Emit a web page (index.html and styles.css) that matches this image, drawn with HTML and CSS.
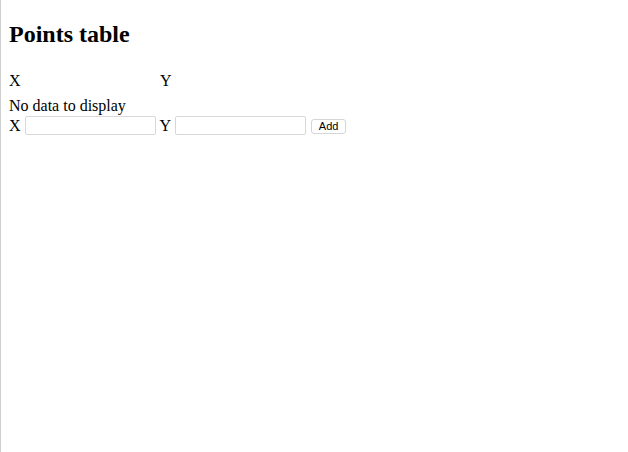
FILE: index.html
```html
<!DOCTYPE html>
<html>
<head>
<meta charset="utf-8">
<title>Points table</title>
<link rel="stylesheet" href="styles.css">
</head>
<body>
<div class="app">
  <h1 class="title">Points table</h1>
  <table class="points">
    <thead>
      <tr><th class="col">X</th><th class="col">Y</th></tr>
    </thead>
  </table>
  <div class="empty">No data to display</div>
  <form class="add-form">
    <label class="lbl">X</label>
    <input class="field" type="text">
    <label class="lbl">Y</label>
    <input class="field" type="text">
    <button class="btn" type="button">Add</button>
  </form>
</div>
</body>
</html>
```
FILE: styles.css
```css
html {
  background: #fff;
  border-left: 1px solid #cfcfcf;
  min-height: 100%;
  box-sizing: border-box;
}
body {
  margin: 0;
  padding: 8px;
  font-family: "Liberation Serif", "Times New Roman", serif;
  font-size: 16px;
  color: #000;
}
.title {
  font-size: 24px;
  font-weight: bold;
  margin: 12px 0 0;
  line-height: 28px;
}
.points {
  border-collapse: collapse;
  margin-top: 24px;
}
.col {
  font-weight: normal;
  text-align: left;
  padding: 0;
  width: 151px;
  line-height: 18px;
}
.empty {
  margin-top: 7px;
  line-height: 18px;
}
.add-form {
  margin: 1px 0 0;
  display: flex;
  align-items: center;
  gap: 4px;
}
.lbl {
  line-height: 18px;
}
.field {
  width: 131px;
  height: 19px;
  box-sizing: border-box;
  border: 1px solid #d8d8d8;
  border-radius: 2px;
  padding: 0 2px;
  margin: 0;
  font-size: 13px;
}
.btn {
  width: 35px;
  height: 15px;
  box-sizing: border-box;
  padding: 0;
  font-family: "Liberation Sans", Arial, sans-serif;
  font-size: 11px;
  line-height: 13px;
  background: #fff;
  border: 1px solid #d6d6d6;
  border-radius: 3px;
  color: #000;
  margin: 1px 0 0 1px;
}
```
